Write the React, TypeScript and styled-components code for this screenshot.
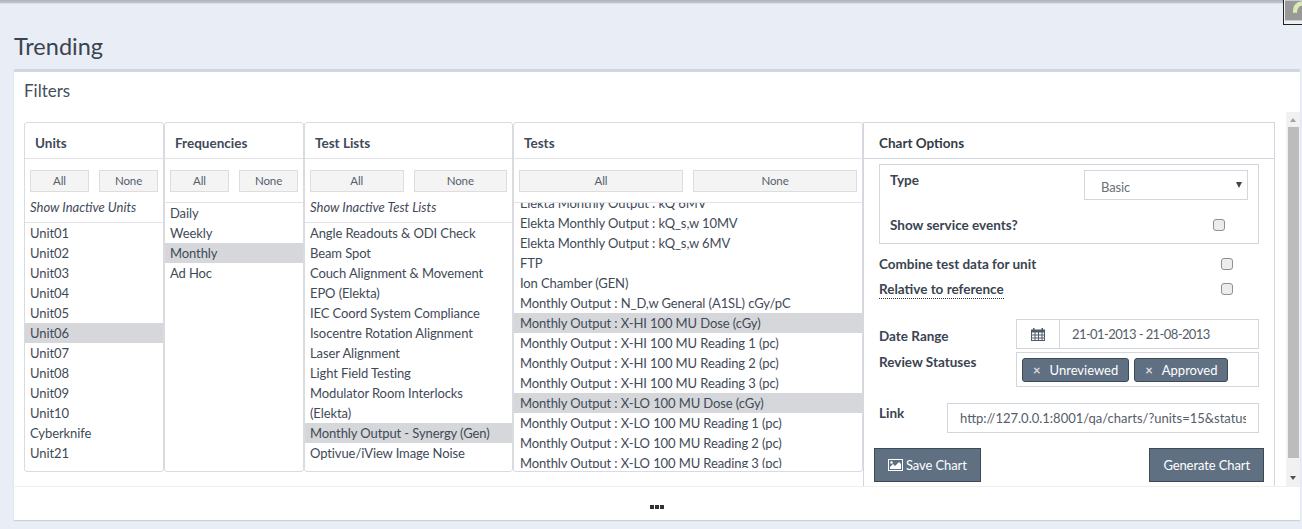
import styled, { createGlobalStyle } from "styled-components";

const units = ["Unit01", "Unit02", "Unit03", "Unit04", "Unit05", "Unit06", "Unit07", "Unit08", "Unit09", "Unit10", "Cyberknife", "Unit21"];
const frequencies = ["Daily", "Weekly", "Monthly", "Ad Hoc"];
const testLists = [
    "Angle Readouts & ODI Check",
    "Beam Spot",
    "Couch Alignment & Movement",
    "EPO (Elekta)",
    "IEC Coord System Compliance",
    "Isocentre Rotation Alignment",
    "Laser Alignment",
    "Light Field Testing",
    "Modulator Room Interlocks (Elekta)",
    "Monthly Output - Synergy (Gen)",
    "Optivue/iView Image Noise",
];
const tests = [
    "Elekta Monthly Output : kQ 6MV",
    "Elekta Monthly Output : kQ_s,w 10MV",
    "Elekta Monthly Output : kQ_s,w 6MV",
    "FTP",
    "Ion Chamber (GEN)",
    "Monthly Output : N_D,w General (A1SL) cGy/pC",
    "Monthly Output : X-HI 100 MU Dose (cGy)",
    "Monthly Output : X-HI 100 MU Reading 1 (pc)",
    "Monthly Output : X-HI 100 MU Reading 2 (pc)",
    "Monthly Output : X-HI 100 MU Reading 3 (pc)",
    "Monthly Output : X-LO 100 MU Dose (cGy)",
    "Monthly Output : X-LO 100 MU Reading 1 (pc)",
    "Monthly Output : X-LO 100 MU Reading 2 (pc)",
    "Monthly Output : X-LO 100 MU Reading 3 (pc)",
];

const FilterColumn = (props: {
    title: string;
    width: number;
    items: string[];
    selected: string[];
    inactive?: string;
    scrolled?: boolean;
}) => {
    return (
        <Column $width={props.width}>
            <ColumnTitle>{props.title}</ColumnTitle>
            <ButtonRow $open={!!props.inactive}>
                <SmallButton>All</SmallButton>
                <SmallButton>None</SmallButton>
            </ButtonRow>
            {props.inactive && <InactiveRow>{props.inactive}</InactiveRow>}
            <ItemList>
                <ItemInner $scrolled={props.scrolled}>
                    {props.items.map((item) => (
                        <Item key={item} $inset={props.scrolled} $selected={props.selected.includes(item)}>{item}</Item>
                    ))}
                </ItemInner>
            </ItemList>
        </Column>
    );
};

const App = () => {
    return (
        <Page>
            <GlobalStyle />
            <TopBar />
            <Badge>
                <svg width="18" height="21" viewBox="0 0 18 21">
                    <rect width="18" height="21" fill="#999" />
                    <path d="M10.500 13 C10.500 7 13 3.500 18 3" fill="none" stroke="#dcebb4" strokeWidth="4.500" />
                </svg>
            </Badge>
            <Title>Trending</Title>
            <Card>
                <CardHeader>Filters</CardHeader>
                <CardBody>
                    <Columns>
                        <FilterColumn title="Units" width={140} items={units} selected={["Unit06"]} inactive="Show Inactive Units" />
                        <FilterColumn title="Frequencies" width={140} items={frequencies} selected={["Monthly"]} />
                        <FilterColumn title="Test Lists" width={209} items={testLists} selected={["Monthly Output - Synergy (Gen)"]} inactive="Show Inactive Test Lists" />
                        <FilterColumn title="Tests" width={350} items={tests} selected={["Monthly Output : X-HI 100 MU Dose (cGy)", "Monthly Output : X-LO 100 MU Dose (cGy)"]} scrolled />
                        <Options>
                            <OptionsTitle>Chart Options</OptionsTitle>
                            <OptionsBody>
                                <TypeBox>
                                    <TypeRow>
                                        <Label>Type</Label>
                                        <SelectBox>Basic<SelectArrow /></SelectBox>
                                    </TypeRow>
                                    <CheckRow $pad={23} $top={15}>
                                        <Label>Show service events?</Label>
                                        <Check />
                                    </CheckRow>
                                </TypeBox>
                                <CheckRow $pad={26} $top={10}>
                                    <Label>Combine test data for unit</Label>
                                    <Check />
                                </CheckRow>
                                <CheckRow $pad={26} $top={5}>
                                    <DottedLabel>Relative to reference</DottedLabel>
                                    <Check />
                                </CheckRow>
                                <DateRow>
                                    <DateLabel>Date Range</DateLabel>
                                    <DateGroup>
                                        <DateAddon>
                                            <svg width="14" height="14" viewBox="0 0 14 14" fill="#4f5b69">
                                                <path d="M0 2.500h2V1h1.500v1.500h7V1H12v1.500h2V14H0zM1 5.500v2h2.500v-2zM4.500 5.500v2H7v-2zM8 5.500v2h2.500v-2zM11.500 5.500v2H13v-2zM1 8.500v2h2.500v-2zM4.500 8.500v2H7v-2zM8 8.500v2h2.500v-2zM11.500 8.500v2H13v-2zM1 11.500V13h2.500v-1.500zM4.500 11.500V13H7v-1.500zM8 11.500V13h2.500v-1.500zM11.500 11.500V13H13v-1.500z" fillRule="evenodd" />
                                            </svg>
                                        </DateAddon>
                                        <DateValue>21-01-2013 - 21-08-2013</DateValue>
                                    </DateGroup>
                                </DateRow>
                                <StatusRow>
                                    <Label>Review Statuses</Label>
                                    <StatusBox>
                                        <Tag><TagX>×</TagX>Unreviewed</Tag>
                                        <Tag><TagX>×</TagX>Approved</Tag>
                                    </StatusBox>
                                </StatusRow>
                                <LinkRow>
                                    <Label>Link</Label>
                                    <LinkBox><LinkText>http://127.0.0.1:8001/qa/charts/?units=15&status=1,2&freq=3</LinkText></LinkBox>
                                </LinkRow>
                                <ActionRow>
                                    <ActionButton>
                                        <svg width="15" height="12" viewBox="0 0 15 12">
                                            <rect x="0.500" y="0.500" width="14" height="11" fill="none" stroke="#fff" />
                                            <path d="M2 10V8l3-3 2 2 4-4 2 2v5z" fill="#fff" />
                                            <circle cx="3.500" cy="3.500" r="1.300" fill="#fff" />
                                        </svg>
                                        Save Chart
                                    </ActionButton>
                                    <ActionButton>Generate Chart</ActionButton>
                                </ActionRow>
                            </OptionsBody>
                        </Options>
                    </Columns>
                    <Scrollbar>
                        <ScrollArrow $up />
                        <ScrollThumb />
                        <ScrollArrow />
                    </Scrollbar>
                </CardBody>
                <CardFooter><Dots><i /><i /><i /></Dots></CardFooter>
            </Card>
        </Page>
    );
};

const GlobalStyle = createGlobalStyle`
    html, body {
        margin: 0;
        height: 100%;
        overflow: hidden;
        background: #e9edf5;
    }
    * {
        box-sizing: border-box;
    }
`;

const Page = styled.div`
    position: relative;
    width: 1302px;
    height: 529px;
    overflow: hidden;
    padding: 0 2px 0 14px;
    font-family: "Lato", "Noto Sans", sans-serif;
    font-size: 13px;
    letter-spacing: -0.1px;
    line-height: 20px;
    color: #3f4a57;
`;
const TopBar = styled.div`
    margin-left: -14px;
    margin-right: -2px;
    height: 4px;
    background: linear-gradient(#aeb2ba, #bcc0c8 60%, #e9edf5);
`;
const Badge = styled.div`
    position: absolute;
    top: 0;
    right: 0;
    width: 19px;
    height: 25px;
    padding: 0 0 3px 1px;
    background: #eef0f4;
    border-left: 1px solid #222;
    border-bottom: 1px solid #222;
    display: flex;
`;
const Title = styled.h1`
    margin: 0;
    padding-top: 28px;
    height: 65px;
    font-size: 23.500px;
    font-weight: 400;
    letter-spacing: 0;
    line-height: 28px;
    color: #3a4450;
`;
const Card = styled.div`
    height: 451px;
    background: #fff;
    border-top: 3px solid #d2d6de;
    box-shadow: 0 1px 1px rgba(0, 0, 0, 0.12);
    display: flex;
    flex-direction: column;
`;
const CardHeader = styled.div`
    height: 40px;
    padding: 9px 10px 0;
    font-size: 17px;
    letter-spacing: 0;
    line-height: 20px;
    color: #444f5c;
`;
const CardBody = styled.div`
    height: 374px;
    display: flex;
    justify-content: space-between;
    overflow: hidden;
`;
const Columns = styled.div`
    display: flex;
    align-items: flex-start;
    padding: 10px 0 0 10px;
`;
const Column = styled.div<{ $width: number }>`
    width: ${(p) => p.$width}px;
    height: 350px;
    border: 1px solid #d9dbdf;
    border-radius: 3px;
    display: flex;
    flex-direction: column;
    overflow: hidden;
`;
const ColumnTitle = styled.div`
    height: 36px;
    flex: none;
    padding: 10px 10px 0;
    font-size: 13.500px;
    letter-spacing: 0;
    font-weight: 700;
    color: #3f4a57;
    border-bottom: 1px solid #e2e3e6;
`;
const ButtonRow = styled.div<{ $open: boolean }>`
    flex: none;
    height: ${(p) => (p.$open ? "38px" : "44px")};
    padding: 11px 5px 0;
    display: flex;
    gap: 10px;
    border-bottom: ${(p) => (p.$open ? "none" : "1px solid #e2e3e6")};
`;
const SmallButton = styled.div`
    flex: 1;
    height: 22px;
    background: #f4f4f4;
    border: 1px solid #ddd;
    font-size: 11.500px;
    line-height: 20px;
    text-align: center;
    color: #55606d;
`;
const InactiveRow = styled.div`
    flex: none;
    height: 26px;
    padding: 0 5px;
    border-bottom: 1px solid #e2e3e6;
    font-style: italic;
    font-size: 13px;
    letter-spacing: 0;
`;
const ItemList = styled.div`
    flex: 1;
    min-height: 0;
    margin-bottom: 3px;
    overflow: hidden;
`;
const ItemInner = styled.div<{ $scrolled?: boolean }>`
    margin-top: ${(p) => (p.$scrolled ? "-10px" : "0")};
`;
const Item = styled.div<{ $selected?: boolean; $inset?: boolean }>`
    padding: 0 5px 0 ${(p) => (p.$inset ? "6px" : "5px")};
    background: ${(p) => (p.$selected ? "#d6d7da" : "transparent")};
`;
const Options = styled.div`
    width: 412px;
    height: 372px;
    margin-bottom: -8px;
    border: 1px solid #d2d6de;
    border-bottom: none;
`;
const OptionsTitle = styled.div`
    height: 36px;
    padding: 10px 15px 0;
    font-size: 13.500px;
    letter-spacing: 0;
    font-weight: 700;
    color: #333b45;
    border-bottom: 1px solid #d2d6de;
`;
const OptionsBody = styled.div`
    padding: 5px 15px 0;
    display: flex;
    flex-direction: column;
`;
const Label = styled.div`
    font-size: 13.500px;
    letter-spacing: 0;
    font-weight: 700;
    color: #3a4450;
`;
const DottedLabel = styled(Label)`
    align-self: center;
    border-bottom: 1px dotted #333;
    line-height: 18px;
`;
const DateLabel = styled(Label)`
    margin-top: 7px;
`;
const TypeBox = styled.div`
    height: 80px;
    flex: none;
    border: 1px solid #d2d6de;
    padding: 5px 10px 0;
`;
const TypeRow = styled.div`
    display: flex;
    justify-content: space-between;
    height: 30px;
`;
const SelectBox = styled.div`
    position: relative;
    width: 164px;
    height: 30px;
    border: 1px solid #d2d6de;
    padding: 6px 16px 0;
    color: #6b6f75;
`;
const SelectArrow = styled.div`
    position: absolute;
    top: 11px;
    right: 5px;
    border-left: 3px solid transparent;
    border-right: 3px solid transparent;
    border-top: 6px solid #444;
`;
const CheckRow = styled.div<{ $pad: number; $top: number }>`
    display: flex;
    justify-content: space-between;
    align-items: center;
    height: 20px;
    margin-top: ${(p) => p.$top}px;
    padding-right: ${(p) => p.$pad}px;
`;
const Check = styled.div`
    width: 12px;
    height: 12px;
    background: #ececec;
    border: 1px solid #909090;
    border-radius: 3px;
`;
const DateRow = styled.div`
    display: flex;
    justify-content: space-between;
    margin-top: 20px;
    height: 30px;
`;
const DateGroup = styled.div`
    width: 243px;
    height: 30px;
    display: flex;
    border: 1px solid #d2d6de;
`;
const DateAddon = styled.div`
    width: 43px;
    display: flex;
    align-items: center;
    justify-content: center;
    border-right: 1px solid #d2d6de;
`;
const DateValue = styled.div`
    padding: 4px 12px 0;
    letter-spacing: -0.600px;
    color: #555d68;
`;
const StatusRow = styled.div`
    display: flex;
    justify-content: space-between;
    margin-top: 3px;
`;
const StatusBox = styled.div`
    width: 243px;
    height: 35px;
    display: flex;
    gap: 5px;
    padding: 5px;
    border: 1px solid #d2d6de;
`;
const Tag = styled.div`
    height: 24px;
    padding: 0 10px;
    display: flex;
    gap: 9px;
    align-items: center;
    letter-spacing: 0;
    background: #5f7083;
    border: 1px solid #3c4a58;
    border-radius: 3px;
    color: #fff;
`;
const TagX = styled.span`
    font-size: 13px;
    font-weight: 700;
    color: #d8dde3;
`;
const LinkRow = styled.div`
    display: flex;
    justify-content: space-between;
    margin-top: 16px;
`;
const LinkBox = styled.div`
    width: 312px;
    height: 30px;
    padding: 4px 12px;
    border: 1px solid #d2d6de;
`;
const LinkText = styled.div`
    white-space: nowrap;
    overflow: hidden;
    letter-spacing: 0;
    color: #555d68;
`;
const ActionRow = styled.div`
    display: flex;
    justify-content: space-between;
    margin: 15px -5px 0 -5px;
`;
const ActionButton = styled.div`
    height: 34px;
    padding: 0 13px;
    display: flex;
    gap: 3px;
    align-items: center;
    background: #5f7083;
    border: 1px solid #3c4a58;
    color: #fff;
`;
const Scrollbar = styled.div`
    width: 14px;
    background: #f1f1f1;
    display: flex;
    flex-direction: column;
    align-items: center;
`;
const ScrollThumb = styled.div`
    width: 11px;
    flex: 1;
    background: #bcbcbc;
`;
const ScrollArrow = styled.div<{ $up?: boolean }>`
    width: 0;
    height: 4px;
    border-left: 3px solid transparent;
    border-right: 3px solid transparent;
    ${(p) => (p.$up
        ? "border-bottom: 4px solid #a3a3a3; margin: 6px 0 5px;"
        : "border-top: 4px solid #505050; margin: 18px 0 6px;")}
`;
const CardFooter = styled.div`
    flex: 1;
    border-top: 1px solid #f0f0f0;
    display: flex;
    justify-content: center;
    align-items: center;
`;
const Dots = styled.div`
    display: flex;
    gap: 1px;
    margin-top: 6px;
    i {
        width: 4px;
        height: 4px;
        background: #333;
    }
`;

export default App;
